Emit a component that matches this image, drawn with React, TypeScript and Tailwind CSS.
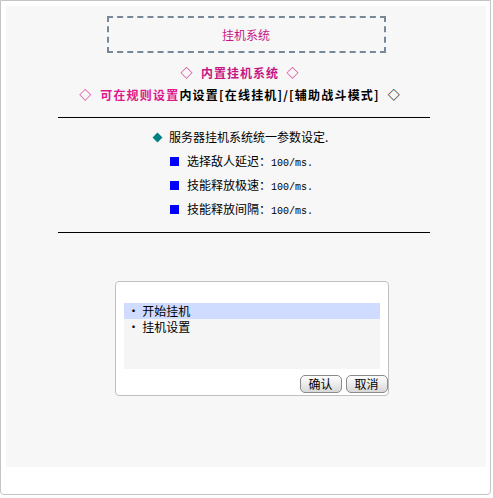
import React from "react";

const settings = [
  { label: "选择敌人延迟", value: "100/ms." },
  { label: "技能释放极速", value: "100/ms." },
  { label: "技能释放间隔", value: "100/ms." },
];

const menu = ["开始挂机", "挂机设置"];

export default function App() {
  return (
    <div
      className="w-[491px] h-[495px] bg-white border border-[#c4c4c4] rounded-b-[4px] pt-[5px] pl-[5px] text-[12px] text-black"
      style={{ fontFamily: '"Noto Sans CJK SC", "Liberation Sans", sans-serif' }}
    >
      <div className="w-[480px] h-[461px] bg-[#f7f7f7] flex flex-col items-center">
        {/* title box */}
        <div className="mt-[10px] w-[279px] h-[37px] border-2 border-dashed border-[#778899] flex items-center justify-center text-[#c71585]">
          挂机系统
        </div>

        <div className="mt-[11px] mr-[12px] h-[18px] leading-[18px] font-bold tracking-[1px] text-[#c71585]">
          ◇&nbsp;&nbsp;内置挂机系统&nbsp;&nbsp;◇
        </div>
        <div className="mt-[4px] mr-[12px] h-[18px] leading-[18px] font-bold tracking-[1.2px]">
          <span className="text-[#e0168c]">◇&nbsp;&nbsp;可在规则设置</span>
          内设置[在线挂机]/[辅助战斗模式]&nbsp;&nbsp;◇
        </div>

        <div className="mt-[13px] mr-[4px] w-[372px] border-t border-black" />

        <div className="w-[372px] mr-[4px] pl-[94px] pt-[10px]">
          <div className="flex items-center h-[18px] gap-[8px]">
            <span className="w-[7px] h-[7px] bg-[#008080] rotate-45 ml-[2px]" />
            <span>服务器挂机系统统一参数设定.</span>
          </div>
          {settings.map((s) => (
            <div key={s.label} className="flex items-center h-[18px] mt-[6px] pl-[18px] gap-[8px]">
              <span className="w-[9px] h-[9px] bg-[#0000ff]" />
              <span>
                {s.label}：<span style={{ fontFamily: '"Liberation Mono", monospace' }} className="text-[10px]">{s.value}</span>
              </span>
            </div>
          ))}
        </div>

        <div className="mt-[14px] mr-[4px] w-[372px] border-t border-black" />

        {/* menu dialog */}
        <div className="mt-[48px] ml-[11px] w-[274px] h-[115px] bg-white border border-[#c0c0c0] rounded-[4px] flex flex-col pt-[21px] px-[8px]">
          <div className="h-[66px] bg-[#f5f5f5]">
            {menu.map((m, i) => (
              <div
                key={m}
                className={"h-[16px] leading-[16px] pl-[4px] " + (i === 0 ? "bg-[#cfdcff]" : "")}
              >
                · {m}
              </div>
            ))}
          </div>
          <div className="flex justify-end gap-[4px] mt-[6px] -mr-[8px]">
            {["确认", "取消"].map((b) => (
              <button
                key={b}
                className="w-[42px] h-[18px] leading-[16px] text-[12px] rounded-[5px] border border-[#8a8a8a] bg-gradient-to-b from-white to-[#d8d8d8]"
              >
                {b}
              </button>
            ))}
          </div>
        </div>
      </div>
    </div>
  );
}
